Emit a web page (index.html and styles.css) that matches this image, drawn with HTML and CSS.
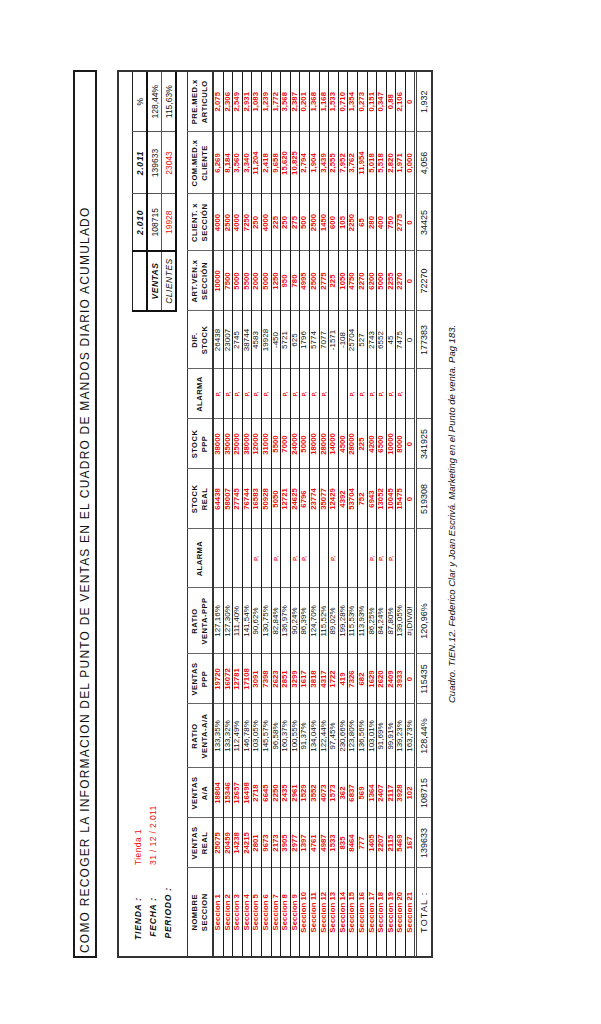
FILE: index.html
```html
<!DOCTYPE html>
<html lang="es">
<head>
<meta charset="utf-8">
<title>Cuadro de mandos diario acumulado</title>
<link rel="stylesheet" href="styles.css">
</head>
<body>
<div class="sheet">
<div class="page">
  <div class="title">COMO RECOGER LA INFORMACION DEL PUNTO DE VENTAS EN EL CUADRO DE MANDOS DIARIO ACUMULADO</div>
  <div class="frame">
    <div class="info">
      <div class="fields">
        <div class="lbl">TIENDA :</div><div class="val">Tienda 1</div>
        <div class="lbl">FECHA :</div><div class="val">31 / 12 / 2.011</div>
        <div class="lbl long">PERIODO :</div><div class="val"></div>
      </div>
      <table class="summary">
        <colgroup><col class="c60"><col class="c57"><col class="c62"><col class="c60"></colgroup>
        <tr class="sh"><td></td><td class="yr">2.010</td><td class="yr">2.011</td><td>%</td></tr>
        <tr class="sv"><td class="sl b">VENTAS</td><td>108715</td><td>139633</td><td>128,44%</td></tr>
        <tr class="sc"><td class="sl">CLIENTES</td><td class="red">19928</td><td class="red">23043</td><td>115,63%</td></tr>
      </table>
    </div>
    <table class="main">
      <colgroup>
        <col class="c88"><col class="c50"><col class="c50"><col class="c64"><col class="c50">
        <col class="c66"><col class="c59"><col class="c60"><col class="c50"><col class="c50">
        <col class="c58"><col class="c60"><col class="c57"><col class="c62"><col class="c60">
      </colgroup>
      <thead>
        <tr>
          <th>NOMBRE<br>SECCION</th><th>VENTAS<br>REAL</th><th>VENTAS<br>A/A</th><th>RATIO<br>VENTA-A/A</th><th>VENTAS<br>PPP</th>
          <th>RATIO<br>VENTA-PPP</th><th>ALARMA</th><th>STOCK<br>REAL</th><th>STOCK<br>PPP</th><th>ALARMA</th>
          <th>DIF.<br>STOCK</th><th>ART.VEN.x<br>SECCIÓN</th><th>CLIENT. x<br>SECCIÓN</th><th>COM.MED.x<br>CLIENTE</th><th>PRE.MED.x<br>ARTICULO</th>
        </tr>
      </thead>
      <tbody class="data">
        <tr><td>Seccion 1</td><td>25075</td><td>18804</td><td>133,35%</td><td>19720</td><td>127,16%</td><td></td><td>64438</td><td>38000</td><td class="al">P,</td><td>26438</td><td>10000</td><td>4000</td><td>6,269</td><td>2,075</td></tr>
        <tr><td>Seccion 2</td><td>20459</td><td>15346</td><td>133,32%</td><td>16072</td><td>127,30%</td><td></td><td>58007</td><td>35000</td><td class="al">P,</td><td>23007</td><td>7500</td><td>2500</td><td>8,184</td><td>2,306</td></tr>
        <tr><td>Seccion 3</td><td>14238</td><td>12657</td><td>112,49%</td><td>12781</td><td>111,40%</td><td></td><td>27745</td><td>25000</td><td class="al">P,</td><td>2745</td><td>5000</td><td>4000</td><td>3,560</td><td>2,549</td></tr>
        <tr><td>Seccion 4</td><td>24215</td><td>16498</td><td>146,78%</td><td>17108</td><td>141,54%</td><td></td><td>76744</td><td>38000</td><td class="al">P,</td><td>38744</td><td>5500</td><td>7250</td><td>3,340</td><td>2,931</td></tr>
        <tr><td>Seccion 5</td><td>2801</td><td>2718</td><td>103,05%</td><td>3091</td><td>90,62%</td><td class="al">P,</td><td>16583</td><td>12000</td><td class="al">P,</td><td>4583</td><td>2000</td><td>250</td><td>11,204</td><td>1,083</td></tr>
        <tr><td>Seccion 6</td><td>9673</td><td>6645</td><td>145,57%</td><td>7398</td><td>130,75%</td><td></td><td>50928</td><td>31000</td><td class="al">P,</td><td>19928</td><td>5000</td><td>4000</td><td>2,418</td><td>1,239</td></tr>
        <tr><td>Seccion 7</td><td>2173</td><td>2250</td><td>96,58%</td><td>2623</td><td>82,84%</td><td class="al">P,</td><td>5050</td><td>5500</td><td></td><td>-450</td><td>1250</td><td>225</td><td>9,658</td><td>1,772</td></tr>
        <tr><td>Seccion 8</td><td>3905</td><td>2435</td><td>160,37%</td><td>2851</td><td>136,97%</td><td></td><td>12721</td><td>7000</td><td class="al">P,</td><td>5721</td><td>950</td><td>250</td><td>15,620</td><td>3,568</td></tr>
        <tr><td>Seccion 9</td><td>2977</td><td>2961</td><td>100,55%</td><td>3299</td><td>90,24%</td><td class="al">P,</td><td>24625</td><td>24000</td><td class="al">P,</td><td>625</td><td>780</td><td>275</td><td>10,825</td><td>2,387</td></tr>
        <tr><td>Seccion 10</td><td>1397</td><td>1529</td><td>91,37%</td><td>1617</td><td>86,39%</td><td class="al">P,</td><td>6796</td><td>5000</td><td class="al">P,</td><td>1796</td><td>4995</td><td>500</td><td>2,794</td><td>0,201</td></tr>
        <tr><td>Seccion 11</td><td>4761</td><td>3552</td><td>134,04%</td><td>3818</td><td>124,70%</td><td></td><td>23774</td><td>18000</td><td class="al">P,</td><td>5774</td><td>2500</td><td>2500</td><td>1,904</td><td>1,368</td></tr>
        <tr><td>Seccion 12</td><td>4987</td><td>4073</td><td>122,44%</td><td>4317</td><td>115,52%</td><td></td><td>35077</td><td>28000</td><td class="al">P,</td><td>7077</td><td>2775</td><td>1450</td><td>3,439</td><td>1,168</td></tr>
        <tr><td>Seccion 13</td><td>1533</td><td>1573</td><td>97,45%</td><td>1722</td><td>89,02%</td><td class="al">P,</td><td>12429</td><td>14000</td><td></td><td>-1571</td><td>225</td><td>600</td><td>2,555</td><td>1,533</td></tr>
        <tr><td>Seccion 14</td><td>835</td><td>362</td><td>230,66%</td><td>419</td><td>199,28%</td><td></td><td>4392</td><td>4500</td><td></td><td>-108</td><td>1050</td><td>105</td><td>7,952</td><td>0,710</td></tr>
        <tr><td>Seccion 15</td><td>8464</td><td>6837</td><td>123,80%</td><td>7326</td><td>115,53%</td><td></td><td>53704</td><td>28000</td><td class="al">P,</td><td>25704</td><td>4750</td><td>2250</td><td>3,762</td><td>1,354</td></tr>
        <tr><td>Seccion 16</td><td>777</td><td>569</td><td>136,56%</td><td>682</td><td>113,93%</td><td></td><td>752</td><td>225</td><td class="al">P,</td><td>527</td><td>2270</td><td>65</td><td>11,954</td><td>0,273</td></tr>
        <tr><td>Seccion 17</td><td>1405</td><td>1364</td><td>103,01%</td><td>1629</td><td>86,25%</td><td class="al">P,</td><td>6943</td><td>4200</td><td class="al">P,</td><td>2743</td><td>6200</td><td>280</td><td>5,018</td><td>0,151</td></tr>
        <tr><td>Seccion 18</td><td>2207</td><td>2407</td><td>91,69%</td><td>2620</td><td>84,24%</td><td class="al">P,</td><td>13052</td><td>6500</td><td class="al">P,</td><td>6552</td><td>5000</td><td>400</td><td>5,518</td><td>0,347</td></tr>
        <tr><td>Seccion 19</td><td>2115</td><td>2117</td><td>99,91%</td><td>2409</td><td>87,80%</td><td class="al">P,</td><td>10045</td><td>10000</td><td class="al">P,</td><td>45</td><td>2255</td><td>750</td><td>2,820</td><td>0,88</td></tr>
        <tr><td>Seccion 20</td><td>5469</td><td>3928</td><td>139,23%</td><td>3933</td><td>139,05%</td><td></td><td>15475</td><td>8000</td><td class="al">P,</td><td>7475</td><td>2270</td><td>2775</td><td>1,971</td><td>2,106</td></tr>
        <tr><td>Seccion 21</td><td>167</td><td>102</td><td>163,73%</td><td>0</td><td>#¡DIV/0!</td><td></td><td>0</td><td>0</td><td></td><td>0</td><td>0</td><td>0</td><td>0,000</td><td>0</td></tr>
      </tbody>
      <tfoot>
        <tr><td class="tl">TOTAL :</td><td>139633</td><td>108715</td><td>128,44%</td><td>115435</td><td>120,96%</td><td></td><td>519308</td><td>341925</td><td></td><td>177383</td><td>72270</td><td>34425</td><td>4,056</td><td>1,932</td></tr>
      </tfoot>
    </table>
  </div>
  <div class="caption">Cuadro. TIEN.12. Federico Clar y Joan Escrivá. Marketing en el Punto de venta. Pag 183.</div>
</div>
</div>
</body>
</html>
```

FILE: styles.css
```css
html {
  margin: 0;
  padding: 0;
  overflow: hidden;
  background: #ffffff;
}

body {
  margin: 0;
  padding: 0;
  width: 601px;
  height: 1024px;
  background: #ffffff;
}

.sheet {
  width: 601px;
  height: 1024px;
  overflow: hidden;
}

.page {
  width: 1024px;
  height: 601px;
  box-sizing: border-box;
  padding: 73px 0 0 66px;
  transform-origin: 0 0;
  transform: translateY(1024px) rotate(-90deg);
  font-family: "Liberation Sans", Arial, sans-serif;
  color: #111;
}

.title {
  width: 888px;
  height: 24px;
  box-sizing: border-box;
  border: 2px solid #1a1a1a;
  font-size: 12px;
  letter-spacing: 1.2px;
  line-height: 20px;
  padding-left: 3px;
  white-space: nowrap;
  overflow: hidden;
}

.frame {
  margin-top: 20px;
  width: 888px;
  box-sizing: border-box;
  border: 2px solid #333;
}

.info {
  display: flex;
  justify-content: space-between;
  align-items: flex-start;
  height: 68px;
}

.fields {
  display: grid;
  grid-template-columns: 59px auto;
  grid-auto-rows: 15px;
  column-gap: 32px;
  padding-top: 11px;
  align-items: center;
}

.lbl {
  text-align: right;
  font-size: 8.5px;
  font-weight: bold;
  font-style: italic;
  letter-spacing: 0.8px;
  white-space: nowrap;
}

.lbl.long {
  margin-right: -10px;
}

.val {
  color: #ee1111;
  font-size: 8.5px;
  letter-spacing: 0.4px;
  white-space: nowrap;
}

.summary {
  margin-top: 13px;
  width: 239px;
  border-collapse: collapse;
  table-layout: fixed;
  font-size: 8.5px;
}

.summary td {
  border: 1px solid #555;
  height: 13px;
  padding: 0;
  text-align: center;
  white-space: nowrap;
}

.summary tr td:last-child {
  border-right: none;
}

.summary .sh td {
  border-top: 1px solid #222;
  border-bottom: 2px solid #111;
}

.summary .sc td {
  border-bottom: 2px solid #111;
}

.summary td:first-child {
  border-left: 2px solid #111;
  border-right: 2px solid #111;
}

.summary .yr {
  font-weight: bold;
  font-style: italic;
  letter-spacing: 0.8px;
}

.summary .sl {
  font-style: italic;
  letter-spacing: 0.5px;
}

.summary .sl.b {
  font-weight: bold;
}

.red {
  color: #ee1111;
}

.c50 { width: 50px; }
.c57 { width: 57px; }
.c58 { width: 58px; }
.c59 { width: 59px; }
.c60 { width: 60px; }
.c62 { width: 62px; }
.c64 { width: 64px; }
.c66 { width: 66px; }
.c88 { width: 88px; }

.main {
  width: 884px;
  border-collapse: collapse;
  table-layout: fixed;
}

.main th {
  height: 24px;
  padding: 0;
  font-size: 7.6px;
  font-weight: bold;
  letter-spacing: 0.45px;
  line-height: 10px;
  text-align: center;
  vertical-align: middle;
  border-top: 1px solid #333;
  border-left: 1px solid #666;
  border-right: 1px solid #666;
  border-bottom: 2px solid #333;
  white-space: nowrap;
}

.main th:first-child,
.main td:first-child {
  border-left: none;
}

.main th:last-child,
.main td:last-child {
  border-right: none;
}

.data td {
  height: 8.6px;
  padding: 0;
  font-size: 7.8px;
  font-weight: bold;
  line-height: 8.6px;
  text-align: center;
  color: #ee1111;
  border-left: 1px solid #666;
  border-right: 1px solid #666;
  border-bottom: 1px solid #1a1a1a;
  white-space: nowrap;
  overflow: hidden;
}

.data td:nth-child(4),
.data td:nth-child(6),
.data td:nth-child(11) {
  color: #111;
  font-weight: normal;
  font-size: 8px;
}

.data td.al {
  font-size: 6px;
  font-weight: bold;
}

.main tfoot td {
  height: 14px;
  padding: 0;
  font-size: 9px;
  text-align: center;
  color: #111;
  border-top: 3px double #444;
  border-left: 1px solid #666;
  border-right: 1px solid #666;
  white-space: nowrap;
}

.main tfoot td.tl {
  letter-spacing: 1.2px;
}

.caption {
  margin-top: 13px;
  padding-left: 255px;
  font-size: 9.5px;
  font-style: italic;
  white-space: nowrap;
}
```
